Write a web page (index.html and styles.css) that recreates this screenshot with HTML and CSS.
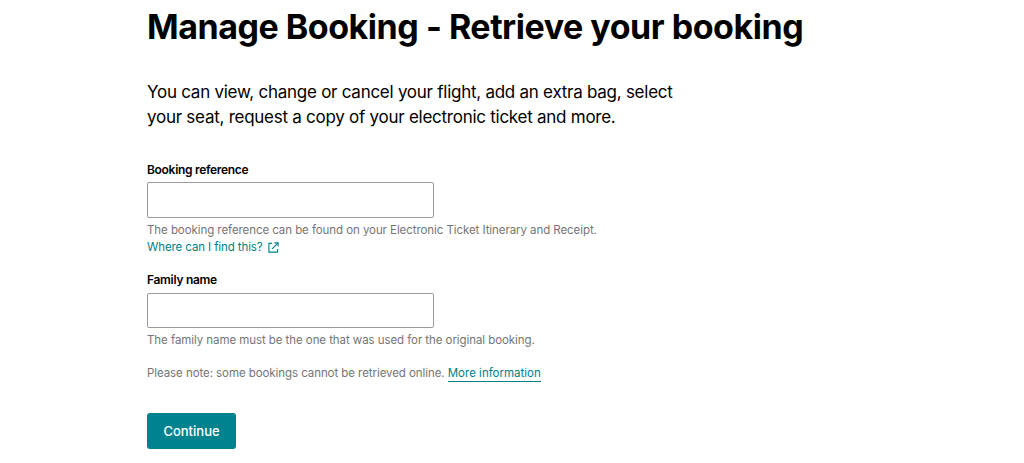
FILE: index.html
```html
<!DOCTYPE html>
<html lang="en">
  <head>
    <meta charset="UTF-8" />
    <title>Manage Booking</title>
    <link rel="stylesheet" href="styles.css">
  </head>
  <body>
    <main class="page">
      <h1 class="title">Manage Booking - Retrieve your booking</h1>
      <p class="intro">You can view, change or cancel your flight, add an extra bag, select<br />your seat, request a copy of your electronic ticket and more.</p>

      <form class="form">
        <div class="field first">
          <label class="label" for="ref">Booking reference</label>
          <input id="ref" class="input" type="text" />
          <div class="hint">The booking reference can be found on your Electronic Ticket Itinerary and Receipt.</div>
          <a class="find-link" href="#">Where can I find this?
            <svg class="ext" viewBox="0 0 12 12" fill="none" stroke="currentColor" stroke-width="1.2">
              <path d="M4.5 1.5H1v9.5h9.5V7.5" />
              <path d="M4.5 7.5L11 1M7 1h4v4" />
            </svg>
          </a>
        </div>
        <div class="field second">
          <label class="label" for="name">Family name</label>
          <input id="name" class="input" type="text" />
          <div class="hint">The family name must be the one that was used for the original booking.</div>
        </div>
        <div class="note">Please note: some bookings cannot be retrieved online. <a class="more" href="#">More information</a></div>
        <button class="button" type="button">Continue</button>
      </form>
    </main>
  </body>
</html>
```

FILE: styles.css
```css
html,
body {
  margin: 0;
  background-color: #fff;
  overflow: hidden;
}

body {
  height: 463px;
  font-family: Inter, "Liberation Sans", sans-serif;
  color: #000;
}

.page {
  padding-left: 147px;
  padding-top: 7px;
}

.title {
  margin: 0;
  font-size: 34px;
  line-height: 40px;
  font-weight: 700;
  letter-spacing: -0.47px;
}

.intro {
  margin: 33px 0 0;
  font-size: 17px;
  line-height: 25px;
  letter-spacing: -0.26px;
}

.form {
  margin-top: 32px;
}

.label {
  display: block;
  font-size: 12px;
  line-height: 16px;
  font-weight: 600;
  letter-spacing: -0.3px;
  margin-bottom: 4px;
}

.input {
  display: block;
  box-sizing: border-box;
  width: 287px;
  height: 36px;
  border: 1px solid #9b9b9b;
  border-radius: 2px;
  outline: none;
  padding: 0 10px;
}

.hint,
.note {
  font-size: 11.5px;
  line-height: 16px;
  color: #757575;
  letter-spacing: -0.07px;
}

.hint {
  margin-top: 4px;
}

.find-link {
  display: flex;
  width: fit-content;
  align-items: center;
  gap: 5px;
  font-size: 11.5px;
  line-height: 18px;
  color: #00818a;
  text-decoration: none;
  letter-spacing: -0.1px;
}

.ext {
  width: 11px;
  height: 11px;
}

.second {
  margin-top: 16px;
}

.second .label {
  margin-bottom: 5px;
}

.second .input {
  height: 35px;
}

.note {
  margin-top: 17px;
}

.more {
  color: #00818a;
  text-decoration: none;
  border-bottom: 1px solid #00818a;
  padding-bottom: 1px;
  letter-spacing: 0;
}

.button {
  display: block;
  margin-top: 32px;
  width: 89px;
  height: 36px;
  border: none;
  border-radius: 3px;
  background-color: #00838f;
  color: #fff;
  font-family: inherit;
  font-size: 13px;
  font-weight: 500;
  padding: 0;
}
```
